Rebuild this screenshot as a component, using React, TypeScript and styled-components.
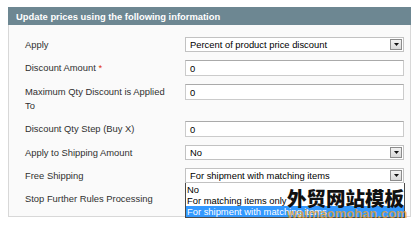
import { createGlobalStyle, styled } from 'styled-components';

const GlobalStyle = createGlobalStyle`
  body {
    margin: 0;
    background: #fff;
    font-family: "Liberation Sans", Arial, sans-serif;
  }
`;

const rows: { label: string; required?: boolean; kind: 'input' | 'select'; value: string }[] = [
  { label: 'Apply', kind: 'select', value: 'Percent of product price discount' },
  { label: 'Discount Amount', required: true, kind: 'input', value: '0' },
  { label: 'Maximum Qty Discount is Applied To', kind: 'input', value: '0' },
  { label: 'Discount Qty Step (Buy X)', kind: 'input', value: '0' },
  { label: 'Apply to Shipping Amount', kind: 'select', value: 'No' },
  { label: 'Free Shipping', kind: 'select', value: 'For shipment with matching items' },
  { label: 'Stop Further Rules Processing', kind: 'select', value: 'No' },
];

const freeShippingOptions = ['No', 'For matching items only', 'For shipment with matching items'];

const App = () => {
  return (
    <SPage>
      <GlobalStyle />
      <SHeader>Update prices using the following information</SHeader>
      <SPanel>
        {rows.map(row => (
          <SRow key={row.label}>
            <SLabel $select={row.kind === 'select'}>
              {row.label}
              {row.required && <SRequired> *</SRequired>}
            </SLabel>
            <SField>
              {row.kind === 'input' ? (
                <SInput>{row.value}</SInput>
              ) : (
                <SSelect>
                  <span>{row.value}</span>
                  <SArrow>
                    <svg width="5" height="3" viewBox="0 0 5 3">
                      <path d="M0 0h5L2.5 3z" fill="#111" />
                    </svg>
                  </SArrow>
                </SSelect>
              )}
              {row.label === 'Free Shipping' && (
                <SOptions>
                  {freeShippingOptions.map(option => (
                    <SOption key={option} $selected={option === row.value}>
                      {option}
                    </SOption>
                  ))}
                </SOptions>
              )}
            </SField>
          </SRow>
        ))}
      </SPanel>
      <SWatermark>
        <SWatermarkTitle>外贸网站模板</SWatermarkTitle>
        <SWatermarkUrl>waimaomohan.com</SWatermarkUrl>
      </SWatermark>
    </SPage>
  );
};

const SPage = styled.div`
  position: relative;
  width: 414px;
  height: 228px;
  overflow: hidden;
  padding: 7px 3px 0 8px;
  box-sizing: border-box;
`;

const SHeader = styled.div`
  height: 18px;
  display: flex;
  align-items: center;
  padding-left: 8px;

  background: #6d8792;
  color: #fff;
  font-size: 9.4px;
  font-weight: bold;
`;

const SPanel = styled.div`
  padding: 8px 6px 6px 16px;

  background: #fafafa;
  border: 1px solid #d8d8d8;
  border-top: none;
`;

const SRow = styled.div`
  display: flex;
  align-items: flex-start;
  padding: 4px 0;
`;

const SLabel = styled.div<{ $select: boolean }>`
  width: 148px;
  flex: none;
  margin-right: 12px;
  padding-top: ${props => (props.$select ? '0.5px' : '1px')};

  color: #303030;
  font-size: 9.4px;
  line-height: 14px;
`;

const SRequired = styled.span`
  color: #e0340c;
`;

const SField = styled.div`
  flex: 1;
  position: relative;
`;

const SInput = styled.div`
  height: 16px;
  box-sizing: border-box;
  padding: 0 4px;
  display: flex;
  align-items: center;

  background: #fff;
  border: 1px solid #cbcbcb;
  border-top-color: #aaa;
  color: #000;
  font-size: 9.4px;
`;

const SSelect = styled.div`
  height: 15px;
  box-sizing: border-box;
  padding: 0 1px 0 4px;
  display: flex;
  align-items: center;
  justify-content: space-between;

  background: #fff;
  border: 1px solid #c2c2c2;
  color: #000;
  font-size: 9.4px;
`;

const SArrow = styled.div`
  width: 12px;
  height: 11px;
  box-sizing: border-box;
  display: flex;
  align-items: center;
  justify-content: center;

  background: linear-gradient(#f2f2f2, #d8d8d8);
  border: 1px solid #8c8c8c;
`;

const SOptions = styled.div`
  position: absolute;
  top: 100%;
  left: 0;
  width: calc(100% + 1px);
  box-sizing: border-box;
  padding-top: 1px;
  z-index: 1;

  background: #fff;
  border: 1px solid #4a4a4a;
  border-top: none;
`;

const SOption = styled.div<{ $selected: boolean }>`
  height: 11px;
  padding-left: 1px;

  background: ${props => (props.$selected ? '#3399ff' : 'transparent')};
  color: ${props => (props.$selected ? '#fff' : '#000')};
  font-size: 9.4px;
  line-height: 11px;
  white-space: nowrap;
`;

const SWatermark = styled.div`
  position: absolute;
  left: 287px;
  top: 187px;
  z-index: 2;
  pointer-events: none;
`;

const SWatermarkTitle = styled.div`
  color: #111;
  font-family: "Noto Sans CJK SC", sans-serif;
  font-size: 19.5px;
  font-weight: 900;
  line-height: 22px;
  white-space: nowrap;
`;

const SWatermarkUrl = styled.div`
  margin-top: -2px;

  color: rgba(238, 160, 40, 0.75);
  font-size: 13px;
  font-weight: bold;
  line-height: 13px;
  white-space: nowrap;
`;

export default App;
